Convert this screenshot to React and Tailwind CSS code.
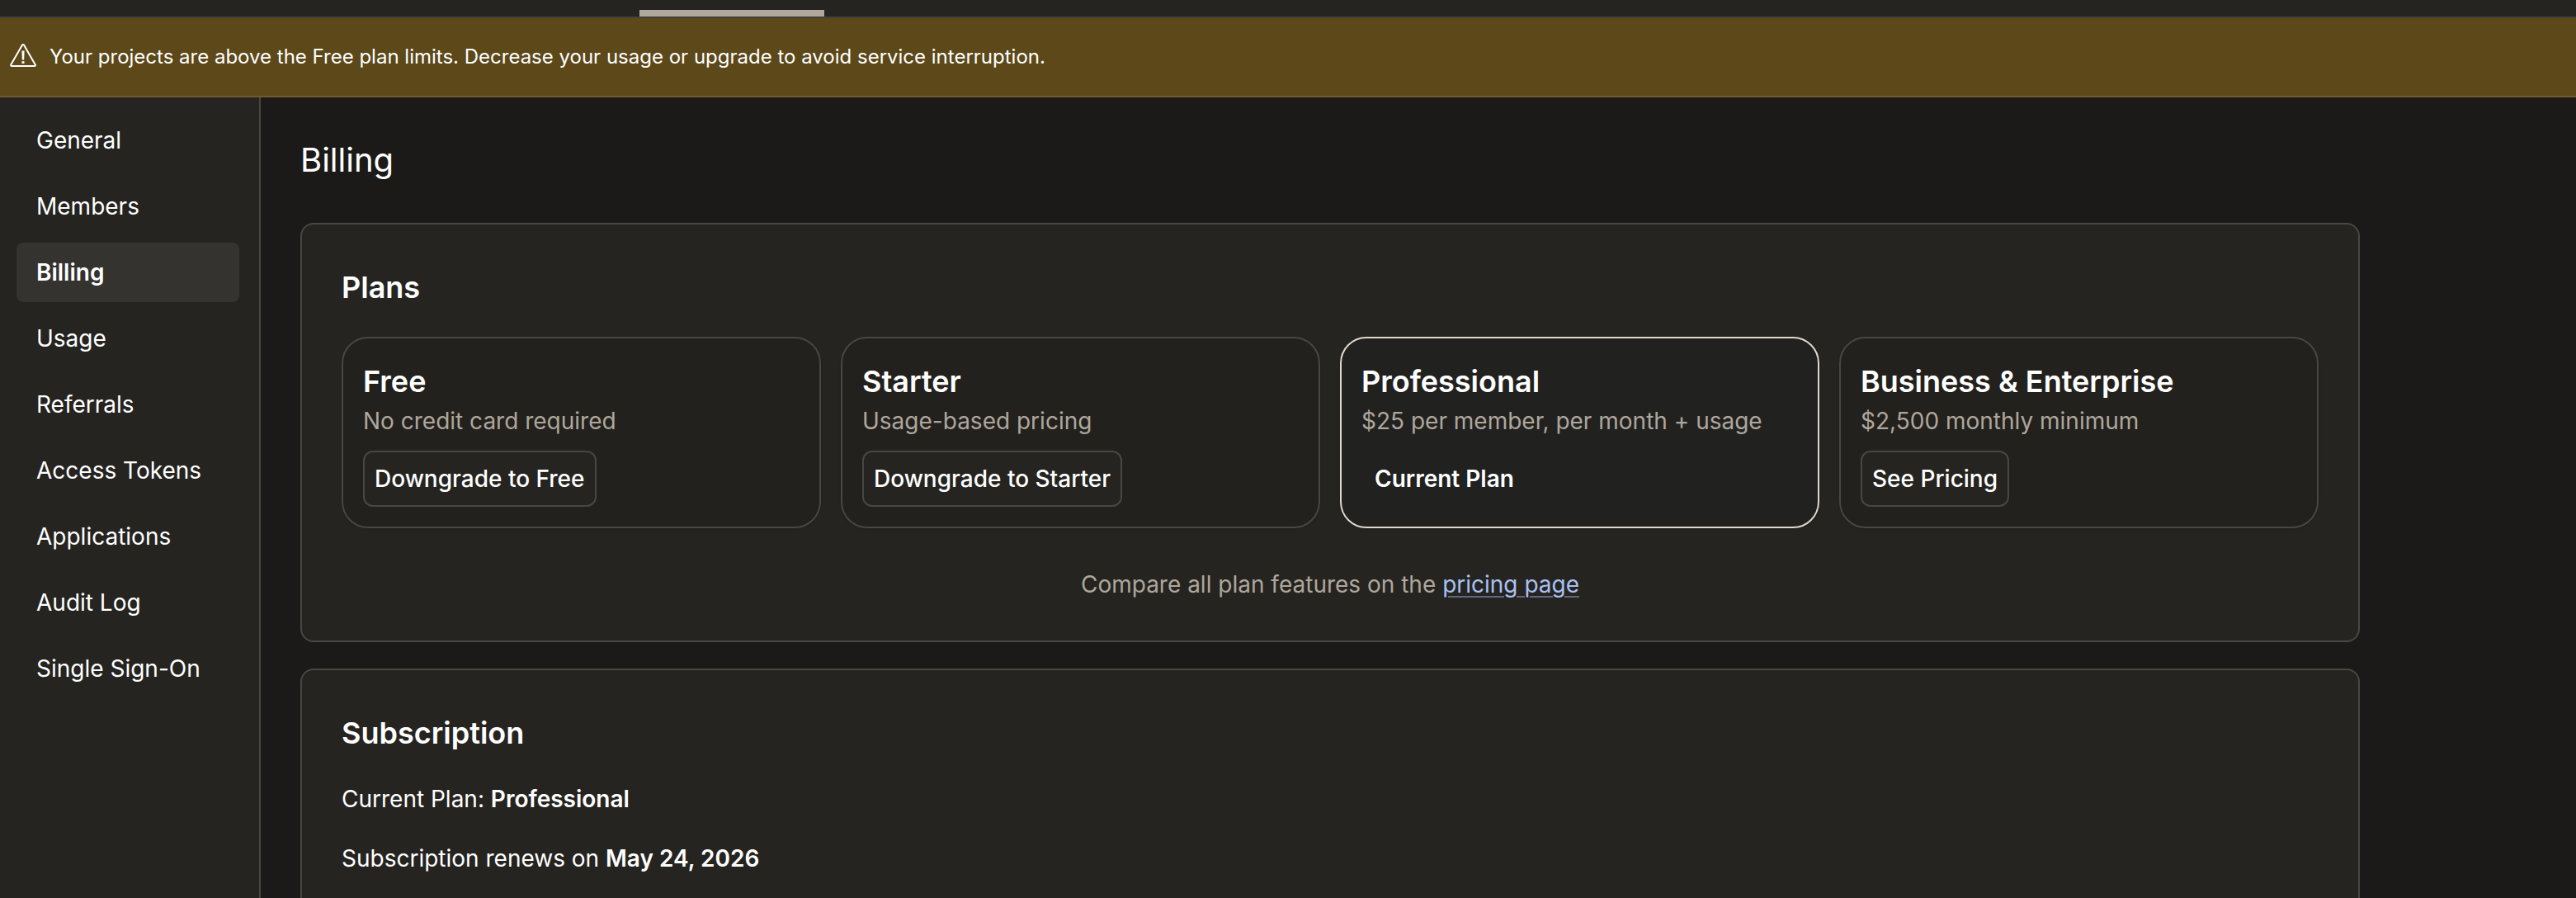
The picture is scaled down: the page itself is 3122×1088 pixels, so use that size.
import React from "react";

const navItems = [
  "General",
  "Members",
  "Billing",
  "Usage",
  "Referrals",
  "Access Tokens",
  "Applications",
  "Audit Log",
  "Single Sign-On",
];

const plans = [
  {
    name: "Free",
    description: "No credit card required",
    action: "Downgrade to Free",
  },
  {
    name: "Starter",
    description: "Usage-based pricing",
    action: "Downgrade to Starter",
  },
  {
    name: "Professional",
    description: "$25 per member, per month + usage",
    current: true,
  },
  {
    name: "Business & Enterprise",
    description: "$2,500 monthly minimum",
    action: "See Pricing",
  },
];

const WarningIcon = () => (
  <svg
    className="size-9 shrink-0"
    viewBox="0 0 36 36"
    fill="none"
    stroke="currentColor"
    strokeWidth="2"
    strokeLinejoin="round"
    aria-hidden="true"
  >
    <path d="M17 3.6 3.2 27.4c-.4.7.1 1.6.9 1.6h27.8c.8 0 1.3-.9.9-1.6L19 3.6c-.4-.8-1.6-.8-2 0Z" />
    <path
      d="M16.4 10.5h3.2l-.4 11h-2.4ZM16.5 23.2h3v2.8h-3Z"
      fill="currentColor"
      stroke="none"
    />
  </svg>
);

const UsageBanner = () => (
  <div
    role="alert"
    className="flex h-24 shrink-0 items-center gap-3.5 border-b-2 border-[#6d5b34] bg-[#5c4819] px-2.5 text-[24px] leading-8"
  >
    <WarningIcon />
    <p>
      Your projects are above the Free plan limits. Decrease your usage or
      upgrade to avoid service interruption.
    </p>
  </div>
);

const Sidebar = ({ active }) => (
  <nav className="w-[316px] shrink-0 border-r-2 border-[#484742] bg-[#252420] pt-4 pr-6 pl-5">
    <ul className="flex flex-col gap-2">
      {navItems.map((item) => (
        <li key={item}>
          <a
            href="#"
            aria-current={item === active ? "page" : undefined}
            className={`block rounded-lg px-6 py-4 leading-10 ${
              item === active ? "bg-[#343330] font-semibold" : ""
            }`}
          >
            {item}
          </a>
        </li>
      ))}
    </ul>
  </nav>
);

const Sheet = ({ title, children }) => (
  <section className="flex flex-col gap-8 rounded-2xl border-2 border-[#484742] bg-[#252420] p-12">
    <h3 className="text-[36px] leading-14 font-semibold">{title}</h3>
    {children}
  </section>
);

const PlanCard = ({ plan }) => (
  <div
    className={`flex flex-col items-start rounded-[32px] border-2 p-6 shadow-sm ${
      plan.current
        ? "border-[#e1d7cb] bg-[#212120]"
        : "border-[#484742] bg-[#22211d]"
    }`}
  >
    <h4 className="text-[36px] leading-14 font-semibold">{plan.name}</h4>
    <p className="leading-10 text-[#afa69c]">{plan.description}</p>
    {plan.current ? (
      <p className="mt-4 px-4 py-3.5 leading-10 font-semibold">Current Plan</p>
    ) : (
      <button
        type="button"
        className="mt-4 rounded-xl border-2 border-[#484742] bg-[#252420] p-3 leading-10 font-medium"
      >
        {plan.action}
      </button>
    )}
  </div>
);

const App = () => {
  return (
    <div className="flex h-screen flex-col overflow-hidden bg-[#1b1a18] font-['Inter',sans-serif] text-[28px] text-white [font-optical-sizing:none]">
      <header className="flex h-[22px] shrink-0 items-end border-b-2 border-[#42413f] bg-[#252420] pl-[775px]">
        <div className="h-2 w-56 bg-[#b0a79d]" />
      </header>
      <UsageBanner />
      <div className="flex min-h-0 grow">
        <Sidebar active="Billing" />
        <main className="grow overflow-hidden p-12">
          <div className="flex max-w-[2496px] flex-col">
            <h2 className="mb-12 text-[40px] leading-14">Billing</h2>
            <div className="flex flex-col gap-8">
              <Sheet title="Plans">
                <div className="grid grid-cols-4 gap-6">
                  {plans.map((plan) => (
                    <PlanCard key={plan.name} plan={plan} />
                  ))}
                </div>
                <p className="mt-4 text-center leading-10 text-[#afa69c]">
                  Compare all plan features on the{" "}
                  <a
                    href="#"
                    className="text-[#aac1f0] underline decoration-[#5f6880] decoration-2 underline-offset-4"
                  >
                    pricing page
                  </a>
                </p>
              </Sheet>
              <Sheet title="Subscription">
                <p className="leading-10">
                  Current Plan:{" "}
                  <span className="font-semibold">Professional</span>
                </p>
                <p className="leading-10">
                  Subscription renews on{" "}
                  <span className="font-semibold">May 24, 2026</span>
                </p>
              </Sheet>
            </div>
          </div>
        </main>
      </div>
    </div>
  );
};

export default App;
